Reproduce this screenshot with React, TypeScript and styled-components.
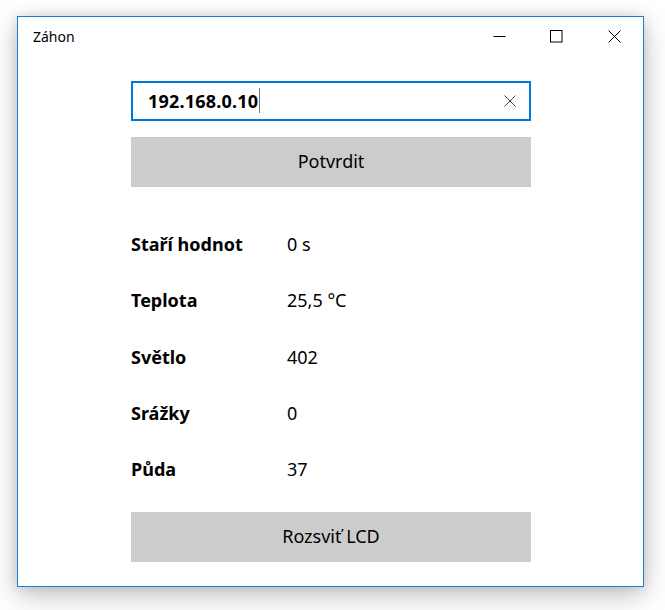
import React from "react";
import styled, { createGlobalStyle } from "styled-components";

const GlobalStyle = createGlobalStyle`
  html, body { margin: 0; padding: 0; background: #ffffff; }
  body { font-family: "Noto Sans", "Open Sans", sans-serif; color: #000; }
`;

const Stage = styled.div`
  width: 665px;
  height: 610px;
  padding: 16px 0 0 17px;
  box-sizing: border-box;
`;

const Window = styled.div`
  width: 627px;
  height: 571px;
  box-sizing: border-box;
  border: 1px solid #1a7fd6;
  background: #ffffff;
  box-shadow: 0 8px 26px rgba(0, 0, 0, 0.26), 0 0 10px rgba(0, 0, 0, 0.1);
  display: flex;
  flex-direction: column;
`;

const TitleBar = styled.div`
  height: 40px;
  display: flex;
  align-items: center;
  justify-content: space-between;
`;

const Title = styled.div`
  padding-left: 15px;
  font-size: 14px;
  color: #000;
  padding-bottom: 2px;
`;

const Controls = styled.div`
  display: flex;
  height: 100%;
`;

const ControlButton = styled.div`
  width: 57.5px;
  height: 100%;
  display: flex;
  align-items: center;
  justify-content: center;
  padding-bottom: 2px;
  box-sizing: border-box;
`;

const Content = styled.div`
  padding: 24px 0 0 113px;
  display: flex;
  flex-direction: column;
  width: 400px;
`;

const TextBox = styled.div`
  height: 40px;
  box-sizing: border-box;
  border: 2px solid #0078d7;
  display: flex;
  align-items: center;
  padding: 0 12px 0 15px;
`;

const InputText = styled.span`
  font-size: 18px;
  font-weight: 700;
  letter-spacing: 0.2px;
  flex: 1;
  display: flex;
  align-items: center;
  padding-bottom: 1px;
`;

const Caret = styled.span`
  display: inline-block;
  width: 1px;
  height: 25px;
  background: #7a7a7a;
  margin-left: 1px;
`;

const ClearButton = styled.div`
  width: 14px;
  height: 14px;
  display: flex;
  align-items: center;
  justify-content: center;
`;

const ActionButton = styled.div<{ $top: number }>`
  margin-top: ${(p) => p.$top}px;
  height: 50px;
  background: #cccccc;
  display: flex;
  align-items: center;
  justify-content: center;
  font-size: 18px;
  color: #000;
  padding-bottom: 2px;
  box-sizing: border-box;
`;

const DataList = styled.div`
  margin-top: 29px;
  display: flex;
  flex-direction: column;
`;

const Row = styled.div`
  height: 56.25px;
  display: grid;
  grid-template-columns: 156px 1fr;
  align-items: center;
  font-size: 18px;
`;

const Label = styled.span`
  font-weight: 700;
`;

const Value = styled.span`
  font-weight: 400;
`;

const rows: [string, string][] = [
  ["Staří hodnot", "0 s"],
  ["Teplota", "25,5 °C"],
  ["Světlo", "402"],
  ["Srážky", "0"],
  ["Půda", "37"],
];

export default function App() {
  return (
    <>
      <GlobalStyle />
      <Stage>
        <Window>
          <TitleBar>
            <Title>Záhon</Title>
            <Controls>
              <ControlButton>
                <svg width="13" height="13" viewBox="0 0 13 13">
                  <line x1="0.5" y1="6.5" x2="12.5" y2="6.5" stroke="#000" strokeWidth="1" />
                </svg>
              </ControlButton>
              <ControlButton>
                <svg width="13" height="13" viewBox="0 0 13 13">
                  <rect x="0.5" y="0.5" width="11.5" height="11.5" fill="none" stroke="#000" strokeWidth="1" />
                </svg>
              </ControlButton>
              <ControlButton>
                <svg width="13" height="13" viewBox="0 0 13 13">
                  <path d="M0.5 0.5 L12.5 12.5 M12.5 0.5 L0.5 12.5" stroke="#000" strokeWidth="1" fill="none" />
                </svg>
              </ControlButton>
            </Controls>
          </TitleBar>
          <Content>
            <TextBox>
              <InputText>
                192.168.0.10
                <Caret />
              </InputText>
              <ClearButton>
                <svg width="12" height="12" viewBox="0 0 12 12">
                  <path d="M0.5 0.5 L11.5 11.5 M11.5 0.5 L0.5 11.5" stroke="#444" strokeWidth="1" fill="none" />
                </svg>
              </ClearButton>
            </TextBox>
            <ActionButton $top={16}>Potvrdit</ActionButton>
            <DataList>
              {rows.map(([l, v]) => (
                <Row key={l}>
                  <Label>{l}</Label>
                  <Value>{v}</Value>
                </Row>
              ))}
            </DataList>
            <ActionButton $top={15}>Rozsviť LCD</ActionButton>
          </Content>
        </Window>
      </Stage>
    </>
  );
}
